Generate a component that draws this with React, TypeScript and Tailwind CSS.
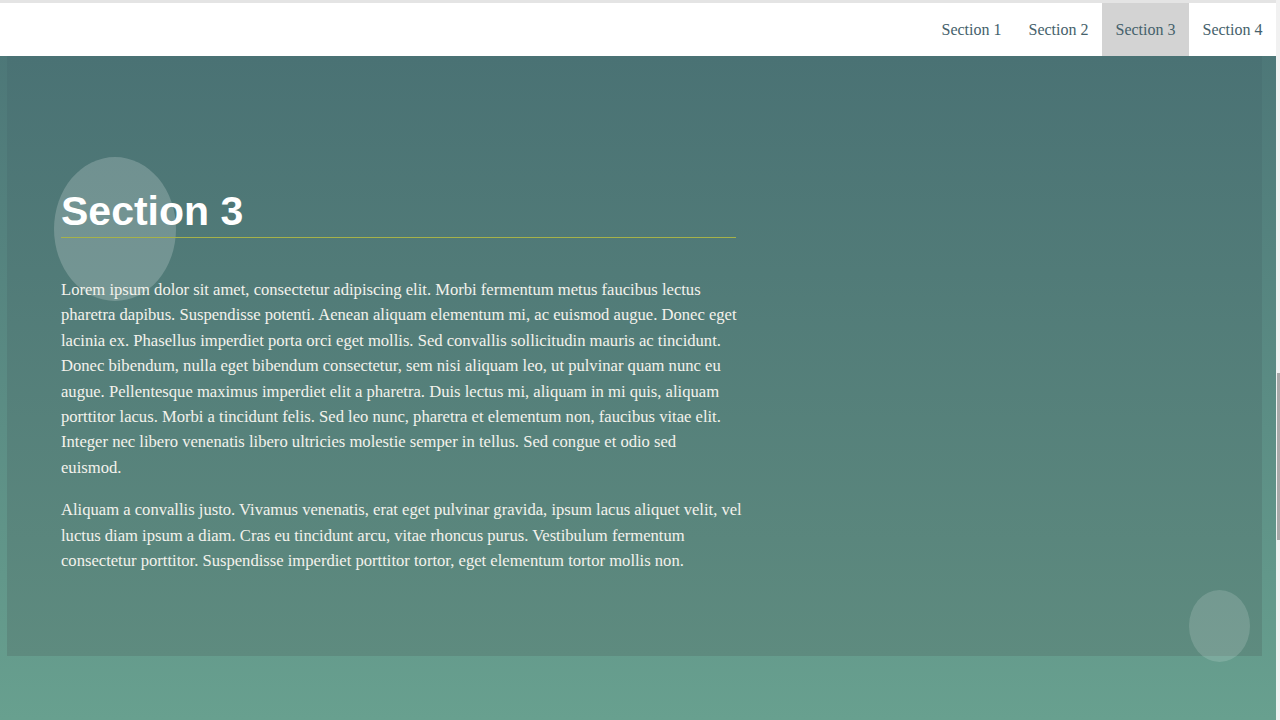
const lines1 = [
  'Lorem ipsum dolor sit amet, consectetur adipiscing elit. Morbi fermentum metus faucibus lectus',
  'pharetra dapibus. Suspendisse potenti. Aenean aliquam elementum mi, ac euismod augue. Donec eget',
  'lacinia ex. Phasellus imperdiet porta orci eget mollis. Sed convallis sollicitudin mauris ac tincidunt.',
  'Donec bibendum, nulla eget bibendum consectetur, sem nisi aliquam leo, ut pulvinar quam nunc eu',
  'augue. Pellentesque maximus imperdiet elit a pharetra. Duis lectus mi, aliquam in mi quis, aliquam',
  'porttitor lacus. Morbi a tincidunt felis. Sed leo nunc, pharetra et elementum non, faucibus vitae elit.',
  'Integer nec libero venenatis libero ultricies molestie semper in tellus. Sed congue et odio sed',
  'euismod.',
];

const lines2 = [
  'Aliquam a convallis justo. Vivamus venenatis, erat eget pulvinar gravida, ipsum lacus aliquet velit, vel',
  'luctus diam ipsum a diam. Cras eu tincidunt arcu, vitae rhoncus purus. Vestibulum fermentum',
  'consectetur porttitor. Suspendisse imperdiet porttitor tortor, eget elementum tortor mollis non.',
];

const navItems = ['Section 1', 'Section 2', 'Section 3', 'Section 4'];

export default function App() {
  return (
    <div className="flex h-[720px] w-[1280px] overflow-hidden">
      <div className="flex w-[1276px] flex-col bg-gradient-to-b from-[#4b7476] to-[#68a08f]">
        {/* top navigation */}
        <nav className="flex h-[56px] justify-end border-t-[3px] border-[#e4e4e4] bg-white font-['Liberation_Serif',serif] text-[16px] text-[#45616b]">
          {navItems.map((item) => (
            <a
              key={item}
              className={
                item === 'Section 3'
                  ? 'flex w-[87px] items-center justify-center bg-[#d3d3d3]'
                  : 'flex w-[87px] items-center justify-center'
              }
            >
              {item}
            </a>
          ))}
        </nav>

        {/* section box */}
        <section className="relative ml-[7px] h-[600px] w-[1255px] bg-gradient-to-b from-[#4a7274] to-[#5e8b7f]">
          <div className="absolute left-[47px] top-[101px] h-[144px] w-[122px] rounded-[50%] bg-white/20" />
          <div className="absolute left-[1182px] top-[534px] h-[72px] w-[61px] rounded-[50%] bg-white/15" />

          <div className="relative w-[729px] pl-[54px] pt-[134px]">
            <h2 className="pb-[4px] font-['Liberation_Sans',Arial,sans-serif] text-[41px] font-bold leading-[43px] text-white">
              Section 3
            </h2>
            <div className="mb-[39px] h-px bg-[#a6b24a]" />
            <p className="mb-[17px] font-['Liberation_Serif',serif] text-[16.6px] leading-[25.4px] text-[#f3f2ec]">
              {lines1.map((l, i) => (
                <span key={i} className="block whitespace-nowrap">{l}</span>
              ))}
            </p>
            <p className="font-['Liberation_Serif',serif] text-[16.6px] leading-[25.4px] text-[#f3f2ec]">
              {lines2.map((l, i) => (
                <span key={i} className="block whitespace-nowrap">{l}</span>
              ))}
            </p>
          </div>
        </section>
      </div>

      {/* scrollbar */}
      <div className="relative w-[4px] bg-[#f1f1f1]">
        <div className="absolute left-[1px] top-[373px] h-[167px] w-[3px] bg-[#a9a9a9]" />
      </div>
    </div>
  );
}
